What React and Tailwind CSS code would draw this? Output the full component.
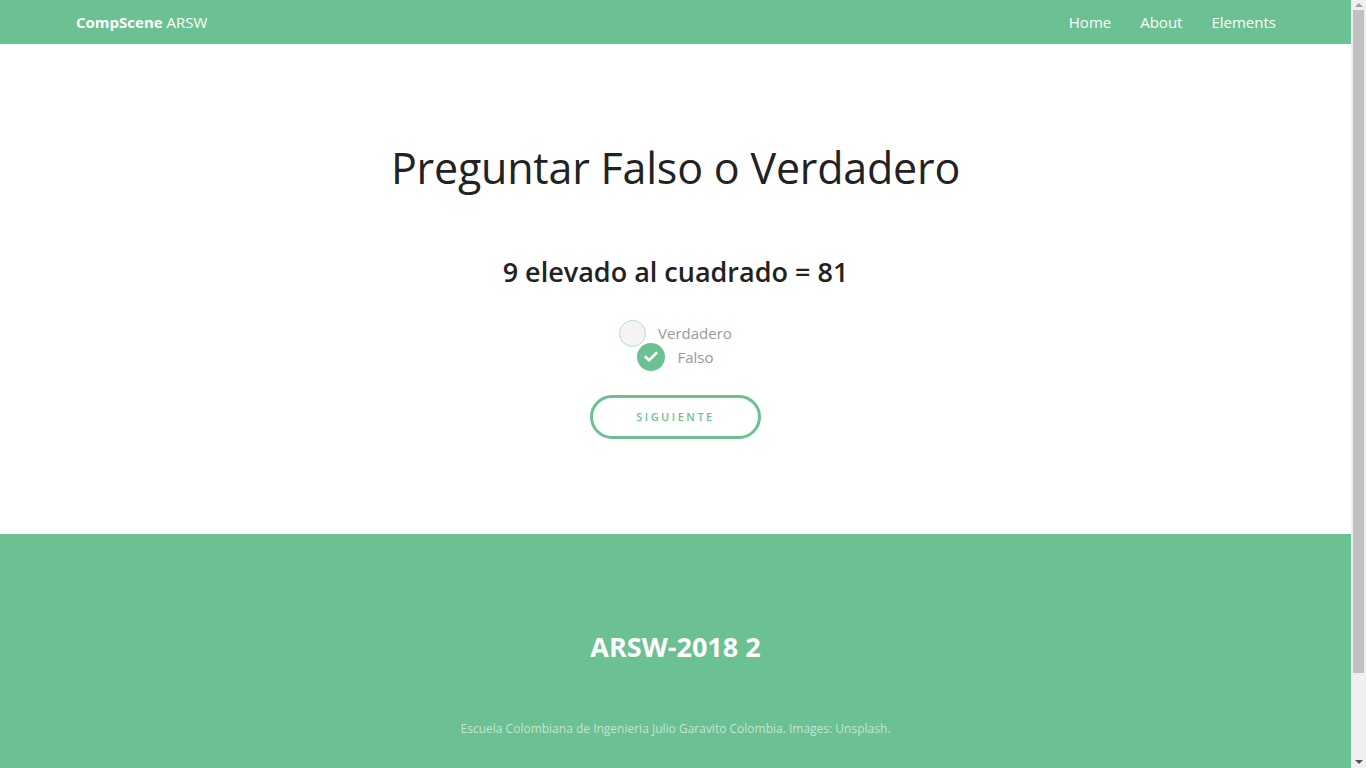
import { Check } from "lucide-react";

const font = { fontFamily: '"Open Sans", "Noto Sans", sans-serif' };

function Nav() {
    return (
        <header className="h-[44px] shrink-0 bg-[#6bc192] text-white flex items-center justify-between pl-[76px] pr-[75px]">
            <div className="text-[15px]">
                <span className="font-bold">CompScene</span> ARSW
            </div>
            <nav className="flex gap-[29px] text-[15px]">
                <a href="#">Home</a>
                <a href="#">About</a>
                <a href="#">Elements</a>
            </nav>
        </header>
    );
}

// window scrollbar as seen in the screenshot
function Scrollbar() {
    return (
        <aside className="w-[15px] shrink-0 h-screen bg-[#f0f0f0] flex flex-col items-center">
            <div className="h-[10px] flex items-center justify-center">
                <span className="w-0 h-0 border-l-[4px] border-r-[4px] border-b-[4px] border-l-transparent border-r-transparent border-b-[#a3a3a3]"></span>
            </div>
            <div className="w-[11px] h-[663px] bg-[#c1c1c1]"></div>
            <div className="flex-1"></div>
            <div className="h-[12px] flex items-center justify-center">
                <span className="w-0 h-0 border-l-[4px] border-r-[4px] border-t-[4px] border-l-transparent border-r-transparent border-t-[#505050]"></span>
            </div>
        </aside>
    );
}

export default function App() {
    return (
        <div style={font} className="h-screen overflow-hidden flex">
            <div className="flex-1 min-h-[854px] flex flex-col">
                <Nav />

                <main className="h-[490px] shrink-0 bg-white flex flex-col items-center text-[#222]">
                    <h1 className="mt-[96px] text-[43px] leading-[56px] tracking-[-0.2px]">Preguntar Falso o Verdadero</h1>
                    <h2 className="mt-[58px] text-[27px] leading-[36px] font-semibold">9 elevado al cuadrado = 81</h2>

                    <div className="mt-[31px] flex flex-col items-center text-[15px] text-[#999]">
                        <label className="flex items-center gap-[12px] h-[24px]">
                            <span className="w-[27px] h-[27px] rounded-full border border-[#b6dfc8] bg-[#f3f4f3]"></span>
                            <span>Verdadero</span>
                        </label>
                        <label className="flex items-center gap-[12px] h-[24px]">
                            <span className="w-[28px] h-[28px] rounded-full bg-[#6bc192] flex items-center justify-center">
                                <Check size={16} strokeWidth={4} className="text-white" />
                            </span>
                            <span>Falso</span>
                        </label>
                    </div>

                    <button className="mt-[26px] w-[171px] h-[44px] rounded-full border-[3px] border-[#6bc192] text-[#6bc192] text-[11px] tracking-[2.5px] font-semibold">
                        SIGUIENTE
                    </button>
                </main>

                <footer className="flex-1 bg-[#6bc192] flex flex-col items-center text-white">
                    <h2 className="mt-[93px] text-[27px] leading-[40px] font-bold">ARSW-2018 2</h2>
                    <p className="mt-[53px] text-[12px] text-white/60">
                        Escuela Colombiana de Ingenieria Julio Garavito Colombia. Images: Unsplash.
                    </p>
                </footer>
            </div>
            <Scrollbar />
        </div>
    );
}
